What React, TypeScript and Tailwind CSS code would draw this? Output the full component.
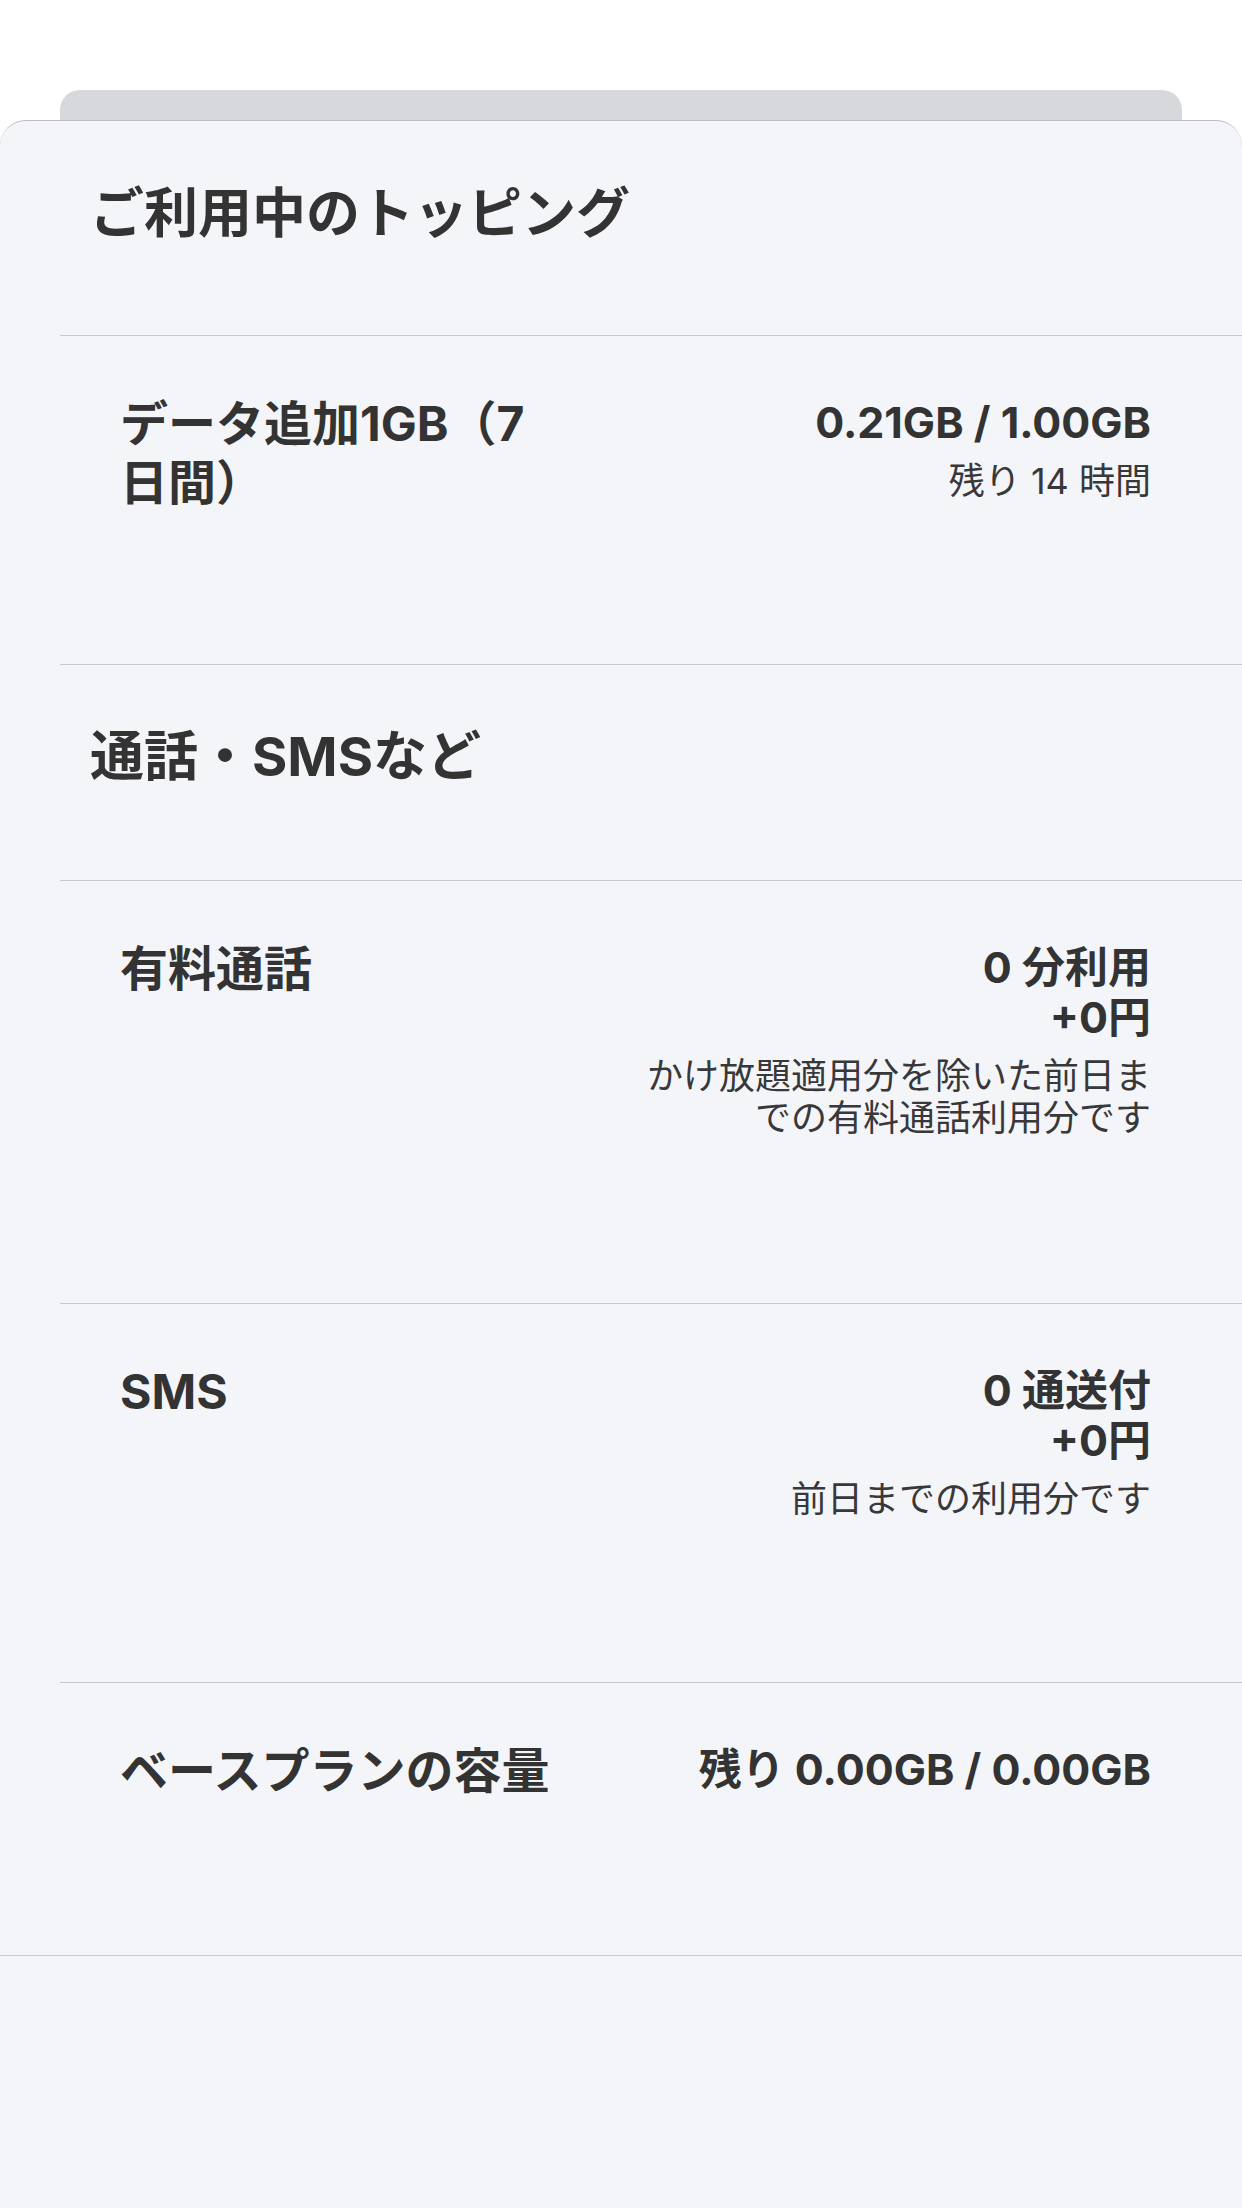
import React from "react";

const font = "font-['Inter','Noto_Sans_CJK_JP',sans-serif]";

function Row({
  title,
  titleClass,
  main,
  sub,
  rowClass,
}: {
  title: React.ReactNode;
  titleClass?: string;
  main: React.ReactNode[];
  sub?: string;
  rowClass: string;
}) {
  return (
    <div className={`ml-[60px] border-t border-[#c8c8cc] flex justify-between items-start pl-[60px] pr-[91px] pt-[58px] ${rowClass}`}>
      <div className="flex-1 min-w-0">
        <div className={`text-[48px] leading-[59px] font-bold text-[#333333] ${titleClass ?? ""}`}>{title}</div>
      </div>
      <div className="max-w-[514px] text-right shrink-0 mt-[3px]">
        {main.map((m, i) => (
          <div key={i} className="text-[43px] leading-[50px] font-bold text-[#333333] whitespace-nowrap">
            {m}
          </div>
        ))}
        {sub && <div className="mt-[13px] text-[36px] leading-[42px] text-[#38383a]">{sub}</div>}
      </div>
    </div>
  );
}

export default function App() {
  return (
    <div className={`w-[1242px] min-h-[2208px] bg-white flex flex-col ${font}`}>
      <div className="h-[90px] shrink-0" />
      <div className="mx-[60px] h-[30px] shrink-0 rounded-t-[20px] bg-[#d7d8dc]" />
      <div className="flex-1 flex flex-col rounded-t-[26px] border-t border-[#bdbdc2] bg-[#f4f5f9]">
        <div className="pl-[90px] pt-[60px] pb-[89px] text-[54px] leading-[65px] font-bold text-[#333333]">
          ご利用中のトッピング
        </div>
        <Row
          title="データ追加1GB（7日間）"
          titleClass="max-w-[430px]"
          main={["0.21GB / 1.00GB"]}
          sub="残り 14 時間"
          rowClass="pb-[152px]"
        />
        <div className="ml-[60px] border-t border-[#c8c8cc] pl-[30px] pt-[59px] pb-[91px] text-[54px] leading-[65px] font-bold text-[#333333]">
          通話・SMSなど
        </div>
        <Row
          title="有料通話"
          main={["0 分利用", "+0円"]}
          sub="かけ放題適用分を除いた前日までの有料通話利用分です"
          rowClass="pb-[164px]"
        />
        <Row
          title="SMS"
          main={["0 通送付", "+0円"]}
          sub="前日までの利用分です"
          rowClass="pb-[162px]"
        />
        <Row
          title="ベースプランの容量"
          main={["残り 0.00GB / 0.00GB"]}
          rowClass="pb-[155px]"
        />
        <div className="flex-1 border-t border-[#c8c8cc] min-h-[252px]" />
      </div>
    </div>
  );
}
